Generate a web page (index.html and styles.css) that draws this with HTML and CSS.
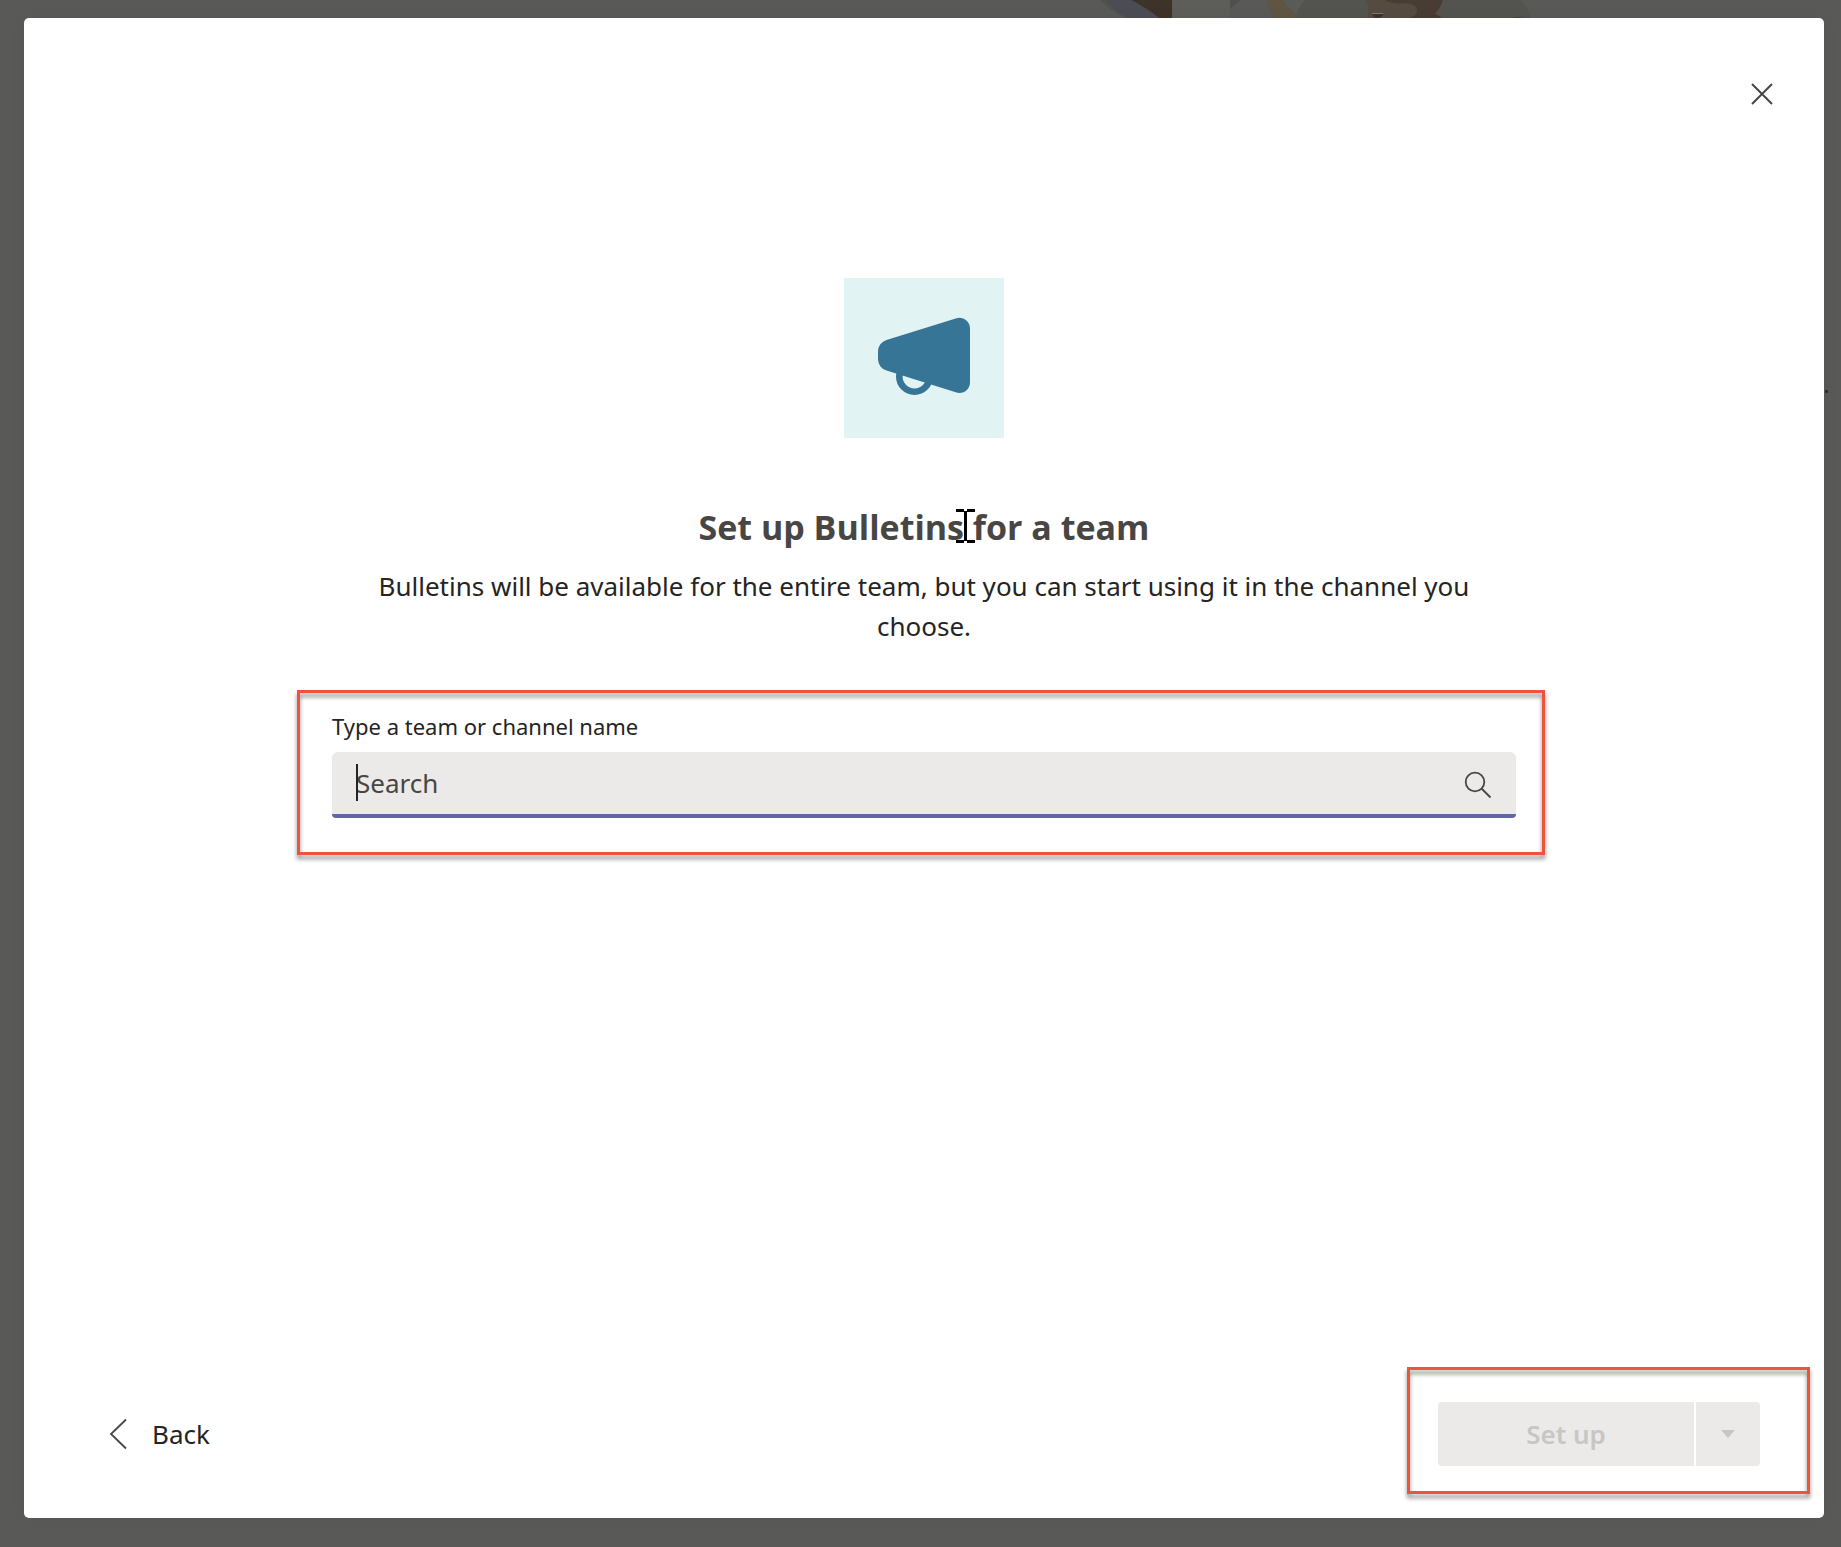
FILE: index.html
```html
<!DOCTYPE html>
<html lang="en">
<head>
<meta charset="utf-8">
<meta name="viewport" content="width=device-width, initial-scale=1">
<title>Set up Bulletins for a team</title>
<link rel="stylesheet" href="styles.css">
</head>
<body class="page">
  <div class="backdrop" aria-hidden="true">
    <svg class="backdrop-art" width="480" height="18" viewBox="0 0 1440 54">
      <path d="M78 0H180L240 54H140Q95 28 78 0Z" fill="#4b4c54"/>
      <path d="M60 0H78Q95 28 138 54Q90 34 60 0Z" fill="#51514f"/>
      <path d="M155 0H276V54H238Q200 24 155 0Z" fill="#3e3329"/>
      <path d="M278 0H450V54H278Z" fill="#5d5d5a"/>
      <path d="M450 0H482L450 26Z" fill="#4f4f4d"/>
      <path d="M558 0H608L656 54H584Q566 30 558 0Z" fill="#5e5545"/>
      <path d="M674 0H1322Q1344 26 1352 54H646Q654 22 674 0Z" fill="#535350"/>
      <path d="M608 0H674Q654 22 650 46Z" fill="#5b5b58"/>
      <path d="M856 0H1010V54H864V20Q862 8 856 0Z" fill="#564b41"/>
      <path d="M915 0H1088Q1084 25 1064 40L1086 54H980Q1010 50 1012 32Q1010 14 980 10Q930 12 915 0Z" fill="#493c32"/>
      <path d="M876 39H910Q908 54 893 54Q878 54 876 39Z" fill="#3f3031"/>
      <path d="M876 39H910V42H876Z" fill="#7a7772"/>
      <path d="M1295 54Q1310 48 1328 54Z" fill="#4c4038"/>
    </svg>
  </div>
  <main class="dialog" role="dialog" aria-labelledby="dialog-title">
    <header class="dialog-header">
      <button class="close-button" type="button" aria-label="Close">
        <svg width="22" height="22" viewBox="0 0 22 22" fill="none" stroke="#484644" stroke-width="2"><path d="M1 1L21 21M21 1L1 21"/></svg>
      </button>
    </header>
    <section class="content">
      <svg class="app-icon" width="160" height="160" viewBox="0 0 160 160" role="img" aria-label="Bulletins">
        <rect width="160" height="160" fill="#e1f3f3"/>
        <circle cx="70.5" cy="98.5" r="15.2" fill="#e1f3f3" stroke="#367595" stroke-width="6.6"/>
        <path d="M42.500 62L112.500 40.300A10.500 10.500 0 0 1 126 50.500V104.500A10.500 10.500 0 0 1 112.500 114.500L42.500 92.600A12 12 0 0 1 34 81.500V73.500A12 12 0 0 1 42.500 62Z" fill="#367595"/>
      </svg>
      <h1 class="title" id="dialog-title">Set up Bulletins for a team
        <svg class="pointer" width="19" height="34" viewBox="0 0 19 34" aria-hidden="true"><path d="M0 0H8V2H11V0H19V3H11V31H19V34H11V32H8V34H0V31H8V3H0Z" fill="#000"/></svg>
      </h1>
      <p class="description">Bulletins will be available for the entire team, but you can start using it in the channel you choose.</p>
      <div class="field callout">
        <label class="field-label" for="team">Type a team or channel name</label>
        <div class="search">
          <input class="search-input" id="team" type="text" placeholder="Search">
          <svg class="search-icon" width="28" height="28" viewBox="0 0 28 28" fill="none" stroke="#484644" stroke-width="1.800"><circle cx="11" cy="11" r="9.300"/><path d="M17.500 17.500L26.500 26.500"/></svg>
        </div>
      </div>
    </section>
    <footer class="dialog-footer">
      <button class="back-button" type="button">
        <svg width="18" height="32" viewBox="0 0 18 32" fill="none" stroke="#484644" stroke-width="1.800"><path d="M17 1.500L2 16L17 30.500"/></svg>
        Back
      </button>
      <div class="split-button callout">
        <button class="setup-button" type="button" disabled>Set up</button>
        <button class="setup-menu" type="button" aria-label="More options" disabled>
          <svg width="14" height="8" viewBox="0 0 14 8"><path d="M0 0H14L7 8Z" fill="#c8c6c4"/></svg>
        </button>
      </div>
    </footer>
  </main>
</body>
</html>
```
FILE: styles.css
```css
* {
  box-sizing: border-box;
}

.page {
  display: flex;
  flex-direction: column;
  min-height: 100vh;
  margin: 0;
  padding: 0 17px 29px 24px;
  background: #595957;
  color: #252423;
  font-family: "Noto Sans", "Open Sans", sans-serif;
  font-size: 26px;
  line-height: 40px;
}

button,
input {
  margin: 0;
  border: 0;
  background: none;
  color: inherit;
  font: inherit;
}

.backdrop {
  display: flex;
  justify-content: flex-end;
  height: 18px;
  padding-right: 264px;
}

/* Sliver of page text that shows beside the dialog */
.backdrop::after {
  content: "";
  position: absolute;
  top: 390px;
  right: 13px;
  width: 3px;
  height: 3px;
  border-radius: 1px;
  background: #2c2c2b;
}

.dialog {
  display: flex;
  flex: 1;
  flex-direction: column;
  border-radius: 5px;
  background: #fff;
  box-shadow: 0 0 16px rgba(0, 0, 0, 0.04);
}

.dialog-header {
  display: flex;
  justify-content: flex-end;
  padding: 44px 30px 0;
}

.close-button {
  display: flex;
  align-items: center;
  justify-content: center;
  width: 64px;
  height: 64px;
}

.content {
  display: flex;
  flex: 1;
  flex-direction: column;
  align-items: center;
  width: 100%;
  max-width: 1184px;
  margin: 0 auto;
  padding-top: 152px;
}

.title {
  position: relative;
  margin: 65px 0 15px;
  color: #484644;
  font-family: "Open Sans", "Noto Sans", sans-serif;
  font-size: 34px;
  font-weight: 700;
  line-height: 48px;
}

.pointer {
  position: absolute;
  top: 6px;
  left: 257px;
}

.description {
  max-width: 1140px;
  margin: 0 0 64px;
  text-align: center;
}

.field {
  display: flex;
  flex-direction: column;
  gap: 10px;
  width: 100%;
}

.field-label {
  font-size: 22px;
  line-height: 32px;
}

.search {
  position: relative;
  display: flex;
  align-items: center;
  height: 66px;
  padding: 0 24px;
  border-bottom: 4px solid #6264a7;
  border-radius: 6px 6px 4px 4px;
  background: #ebeae8;
}

/* Text caret of the focused field */
.search::before {
  content: "";
  position: absolute;
  top: 12px;
  left: 24px;
  width: 2px;
  height: 37px;
  background: #252423;
}

.search-input {
  flex: 1;
  min-width: 0;
  padding: 0;
  outline: none;
}

.search-icon {
  margin-top: 4px;
}

.search-input::placeholder {
  color: #484644;
  opacity: 1;
}

.callout {
  position: relative;
}

.callout::after {
  content: "";
  position: absolute;
  border: 3px solid #ee543b;
  filter: drop-shadow(0 4px 2px rgba(0, 0, 0, 0.45));
  pointer-events: none;
}

.field::after {
  inset: -20px -29px -37px -35px;
}

.split-button::after {
  inset: -35px -50px -28px -31px;
}

.dialog-footer {
  display: flex;
  align-items: center;
  justify-content: space-between;
  padding: 0 64px 52px 85px;
}

.back-button {
  display: flex;
  align-items: center;
  gap: 25px;
  padding: 0;
}

.split-button {
  display: flex;
  gap: 2px;
}

.setup-button {
  width: 256px;
  height: 64px;
  border-radius: 4px 0 0 4px;
  background: #ebeae8;
  color: #c8c6c4;
  font-weight: 600;
}

.setup-menu {
  display: flex;
  align-items: center;
  justify-content: center;
  width: 64px;
  height: 64px;
  border-radius: 0 4px 4px 0;
  background: #ebeae8;
}
```
